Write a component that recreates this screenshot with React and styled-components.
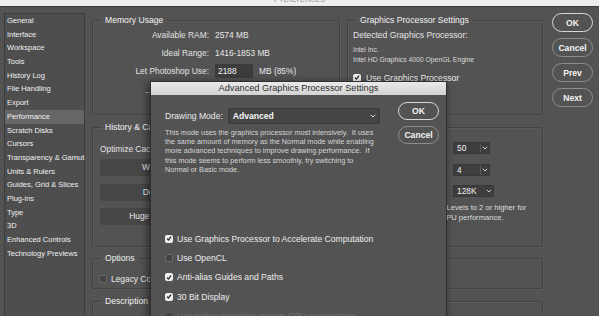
import React from "react";
import styled, { createGlobalStyle } from "styled-components";

const GlobalStyle = createGlobalStyle`
  html, body {
    margin: 0;
    padding: 0;
    background: #535353;
  }
  body {
    font-family: "Liberation Sans", Arial, sans-serif;
    color: #e8e8e8;
  }
  * {
    box-sizing: border-box;
  }
`;

const Window = styled.div`
  position: relative;
  width: 599px;
  height: 316px;
  overflow: hidden;
  background: #535353;
`;

const TitleBar = styled.div`
  height: 7px;
  background: #ededed;
  border-bottom: 1px solid #3b3b3b;
  display: flex;
  justify-content: center;
  overflow: hidden;
`;

const TitleText = styled.span`
  font-size: 9.5px;
  line-height: 10px;
  margin-top: -6px;
  color: #9c9c9c;
`;

const Body = styled.div`
  display: grid;
  grid-template-columns: 81px 451px 43px;
  column-gap: 7px;
  padding: 6px 0 0 4px;
  align-items: start;
`;

const Sidebar = styled.ul`
  margin: 0;
  padding: 0;
  list-style: none;
  height: 320px;
  background: #4e4e4e;
  border: 1px solid #3c3c3c;
`;

const NavItem = styled.li`
  height: 13.7px;
  line-height: 13.7px;
  font-size: 7.5px;
  padding-left: 2px;
  white-space: nowrap;
  color: #f0f0f0;
  background: ${(p) => (p.$active ? "#666666" : "transparent")};
`;

const Main = styled.div`
  display: flex;
  flex-direction: column;
  gap: 6.5px;
  padding-top: 1.5px;
`;

const TopRow = styled.div`
  display: grid;
  grid-template-columns: 248px 196px;
  column-gap: 7px;
`;

const Group = styled.fieldset`
  margin: 0;
  padding: 0;
  min-width: 0;
  height: ${(p) => p.$h}px;
  border: 1px solid #424242;
  border-radius: 2px;
  box-shadow: inset 1px 1px 0 #5b5b5b, 1px 1px 0 #5b5b5b;
`;

const Legend = styled.legend`
  margin-left: 8px;
  padding: 0 4px;
  font-size: 8.6px;
  line-height: 11px;
  color: #f0f0f0;
`;

const InfoGrid = styled.div`
  display: grid;
  grid-template-columns: 116px auto;
  grid-auto-rows: 18px;
  column-gap: 6px;
  align-items: center;
  font-size: 8.4px;
`;

const Label = styled.span`
  text-align: right;
  color: #e2e2e2;
  white-space: nowrap;
`;

const Value = styled.span`
  display: flex;
  align-items: center;
  gap: 6px;
  color: #e8e8e8;
`;

const NumField = styled.span`
  display: inline-block;
  width: 38px;
  height: 14px;
  line-height: 14px;
  padding-left: 3px;
  background: #3c3c3c;
  color: #f4f4f4;
`;

const SliderRow = styled.div`
  grid-column: 1 / -1;
  padding: 8px 0 0 52px;
`;

const Track = styled.div`
  width: 175px;
  height: 1px;
  background: #a0a0a0;
`;

const GpuBody = styled.div`
  padding: 0 5px;
`;

const GpuHeading = styled.div`
  font-size: 8.6px;
  line-height: 18px;
  color: #e4e4e4;
`;

const SmallText = styled.div`
  font-size: 6.8px;
  line-height: 10px;
  color: #dadada;
  white-space: nowrap;
`;

const CheckRow = styled.div`
  display: flex;
  align-items: center;
  gap: ${(p) => p.$gap || 4}px;
  height: ${(p) => p.$h || 14}px;
  margin-top: ${(p) => p.$mt || 0}px;
  font-size: ${(p) => p.$size || 8.6}px;
  color: ${(p) => (p.$dim ? "#707070" : "#ededed")};
  white-space: nowrap;
`;

const Box = styled.span`
  flex: none;
  width: 8px;
  height: 8px;
  border-radius: 1.5px;
  display: flex;
  align-items: center;
  justify-content: center;
  background: ${(p) => (p.$on ? "#efefef" : "#444444")};
  border: 1px solid ${(p) => (p.$on ? "#efefef" : p.$dim ? "#5a5a5a" : "#6c6c6c")};
`;

const HistoryBody = styled.div`
  display: grid;
  grid-template-columns: 210px 1fr;
  align-items: start;
  padding: 11px 0 0 7px;
`;

const CacheCol = styled.div`
  display: flex;
  flex-direction: column;
  gap: 7.5px;
`;

const CacheHint = styled.div`
  font-size: 8.4px;
  line-height: 11px;
  margin-bottom: -3px;
  white-space: nowrap;
  color: #e4e4e4;
`;

const CacheButton = styled.div`
  width: 145px;
  height: 17px;
  line-height: 17px;
  text-align: center;
  font-size: 8.4px;
  background: #474747;
  border-radius: 2px;
  color: #eeeeee;
`;

const FieldGrid = styled.div`
  display: grid;
  grid-template-columns: 137px auto;
  grid-auto-rows: 12px;
  column-gap: 6px;
  row-gap: 9.5px;
  align-items: center;
  margin-top: -1.5px;
  font-size: 8.4px;
`;

const MiniSelect = styled.span`
  display: flex;
  align-items: center;
  width: ${(p) => p.$w}px;
  height: 12px;
  background: #3e3e3e;
  border: 1px solid #383838;
  color: #f2f2f2;
  font-size: 8.4px;
`;

const MiniText = styled.span`
  flex: 1;
  padding-left: 3px;
`;

const MiniArrow = styled.span`
  width: 9px;
  height: 100%;
  display: flex;
  align-items: center;
  justify-content: center;
  border-left: ${(p) => (p.$split ? "1px solid #585858" : "none")};
`;

const Note = styled.div`
  grid-column: 1 / -1;
  padding-left: 99px;
  margin-top: 1px;
  font-size: 7.6px;
  line-height: 10px;
  color: #dedede;
  white-space: nowrap;
`;

const OptionsBody = styled.div`
  padding: 7.5px 0 0 6px;
`;

const ButtonCol = styled.div`
  display: flex;
  flex-direction: column;
  gap: 6px;
  padding-left: 2px;
`;

const PillButton = styled.button`
  width: 41px;
  height: ${(p) => p.$h || 19}px;
  padding: 0;
  border-radius: 10px;
  background: #535353;
  border: ${(p) => (p.$primary ? "1.5px solid #d6d6d6" : "1px solid #8c8c8c")};
  color: #f4f4f4;
  font-family: inherit;
  font-size: 8.6px;
  font-weight: bold;
`;

const Dialog = styled.div`
  position: absolute;
  left: 150px;
  top: 81px;
  width: 297px;
  height: 250px;
  background: #535353;
  border: 1px solid #2f2f2f;
  box-shadow: -2px 2px 8px rgba(0, 0, 0, 0.55);
`;

const DialogTitle = styled.div`
  height: 13px;
  line-height: 13px;
  text-align: center;
  font-size: 9.2px;
  color: #2e2e2e;
  background: linear-gradient(#eaeaea, #d2d2d2);
`;

const DialogBody = styled.div`
  display: grid;
  grid-template-columns: 1fr 42px;
  column-gap: 18px;
  padding: 7px 6px 0 14px;
`;

const DialogMain = styled.div`
  padding-top: 6px;
`;

const ModeRow = styled.div`
  display: flex;
  align-items: center;
  gap: 5px;
  font-size: 8.6px;
`;

const ModeSelect = styled.div`
  flex: 1;
  height: 16px;
  display: flex;
  align-items: center;
  justify-content: space-between;
  padding: 0 3px 0 4px;
  background: #444444;
  border: 1px solid #3a3a3a;
  color: #f6f6f6;
  font-weight: bold;
`;

const Paragraph = styled.div`
  margin-top: 4px;
  font-size: 7.3px;
  line-height: 9.2px;
  color: #d6d6d6;
  white-space: pre;
`;

const CheckList = styled.div`
  margin-top: 55px;
  margin-right: -60px;
`;

const DialogButtons = styled.div`
  display: flex;
  flex-direction: column;
  gap: 6px;
`;

function Chevron({ color = "#cfcfcf" }) {
  return (
    <svg width="6" height="4" viewBox="0 0 6 4">
      <polyline points="0.8,0.8 3,3 5.2,0.8" fill="none" stroke={color} strokeWidth="1" />
    </svg>
  );
}

function Checkbox({ on, dim, children, ...rest }) {
  return (
    <CheckRow $dim={dim} {...rest}>
      <Box $on={on} $dim={dim}>
        {on && (
          <svg width="7" height="7" viewBox="0 0 7 7">
            <polyline points="1.2,3.6 2.8,5.2 5.9,1.4" fill="none" stroke="#2a2a2a" strokeWidth="1.5" />
          </svg>
        )}
      </Box>
      {children}
    </CheckRow>
  );
}

const navItems = [
  "General",
  "Interface",
  "Workspace",
  "Tools",
  "History Log",
  "File Handling",
  "Export",
  "Performance",
  "Scratch Disks",
  "Cursors",
  "Transparency & Gamut",
  "Units & Rulers",
  "Guides, Grid & Slices",
  "Plug-ins",
  "Type",
  "3D",
  "Enhanced Controls",
  "Technology Previews",
];

const description = [
  "This mode uses the graphics processor most intensively.  It uses",
  "the same amount of memory as the Normal mode while enabling",
  "more advanced techniques to improve drawing performance.  If",
  "this mode seems to perform less smoothly, try switching to",
  "Normal or Basic mode.",
].join("\n");

export default function App() {
  return (
    <Window>
      <GlobalStyle />
      <TitleBar>
        <TitleText>Preferences</TitleText>
      </TitleBar>
      <Body>
        <Sidebar>
          {navItems.map((item) => (
            <NavItem key={item} $active={item === "Performance"}>
              {item}
            </NavItem>
          ))}
        </Sidebar>

        <Main>
          <TopRow>
            <Group $h={100.5}>
              <Legend>Memory Usage</Legend>
              <InfoGrid>
                <Label>Available RAM:</Label>
                <Value>2574 MB</Value>
                <Label>Ideal Range:</Label>
                <Value>1416-1853 MB</Value>
                <Label>Let Photoshop Use:</Label>
                <Value>
                  <NumField>2188</NumField>
                  MB (85%)
                </Value>
                <SliderRow>
                  <Track />
                </SliderRow>
              </InfoGrid>
            </Group>
            <Group $h={100.5}>
              <Legend>Graphics Processor Settings</Legend>
              <GpuBody>
                <GpuHeading>Detected Graphics Processor:</GpuHeading>
                <SmallText style={{ marginTop: 1 }}>Intel Inc.</SmallText>
                <SmallText>Intel HD Graphics 4000 OpenGL Engine</SmallText>
                <Checkbox on $mt={6} $gap={5}>
                  Use Graphics Processor
                </Checkbox>
              </GpuBody>
            </Group>
          </TopRow>

          <Group $h={125}>
            <Legend>History &amp; Cache</Legend>
            <HistoryBody>
              <CacheCol>
                <CacheHint>Optimize Cache Levels and Tile Size for:</CacheHint>
                <CacheButton>Web / UI Design</CacheButton>
                <CacheButton>Default / Photos</CacheButton>
                <CacheButton>Huge Pixel Dimensions</CacheButton>
              </CacheCol>
              <FieldGrid>
                <Label>History States:</Label>
                <MiniSelect $w={37}>
                  <MiniText>50</MiniText>
                  <MiniArrow $split>
                    <Chevron />
                  </MiniArrow>
                </MiniSelect>
                <Label>Cache Levels:</Label>
                <MiniSelect $w={37}>
                  <MiniText>4</MiniText>
                  <MiniArrow $split>
                    <Chevron />
                  </MiniArrow>
                </MiniSelect>
                <Label>Cache Tile Size:</Label>
                <MiniSelect $w={41}>
                  <MiniText>128K</MiniText>
                  <MiniArrow>
                    <Chevron />
                  </MiniArrow>
                </MiniSelect>
                <Note>
                  Set Cache Levels to 2 or higher for
                  <br />
                  optimum GPU performance.
                </Note>
              </FieldGrid>
            </HistoryBody>
          </Group>

          <Group $h={36}>
            <Legend>Options</Legend>
            <OptionsBody>
              <Checkbox $size={8.4}>Legacy Compositing</Checkbox>
            </OptionsBody>
          </Group>

          <Group $h={40}>
            <Legend>Description</Legend>
          </Group>
        </Main>

        <ButtonCol>
          <PillButton $primary>OK</PillButton>
          <PillButton>Cancel</PillButton>
          <PillButton>Prev</PillButton>
          <PillButton>Next</PillButton>
        </ButtonCol>
      </Body>

      <Dialog>
        <DialogTitle>Advanced Graphics Processor Settings</DialogTitle>
        <DialogBody>
          <DialogMain>
            <ModeRow>
              <span>Drawing Mode:</span>
              <ModeSelect>
                Advanced
                <Chevron color="#d8d8d8" />
              </ModeSelect>
            </ModeRow>
            <Paragraph>{description}</Paragraph>
            <CheckList>
              <Checkbox on $h={19.3}>
                Use Graphics Processor to Accelerate Computation
              </Checkbox>
              <Checkbox $h={19.3}>Use OpenCL</Checkbox>
              <Checkbox on $h={19.3}>
                Anti-alias Guides and Paths
              </Checkbox>
              <Checkbox on $h={19.3}>
                30 Bit Display
              </Checkbox>
              <Checkbox dim $h={19.3}>
                Use native operating system GPU acceleration
              </Checkbox>
            </CheckList>
          </DialogMain>
          <DialogButtons>
            <PillButton $primary $h={18}>
              OK
            </PillButton>
            <PillButton $h={18}>Cancel</PillButton>
          </DialogButtons>
        </DialogBody>
      </Dialog>
    </Window>
  );
}
